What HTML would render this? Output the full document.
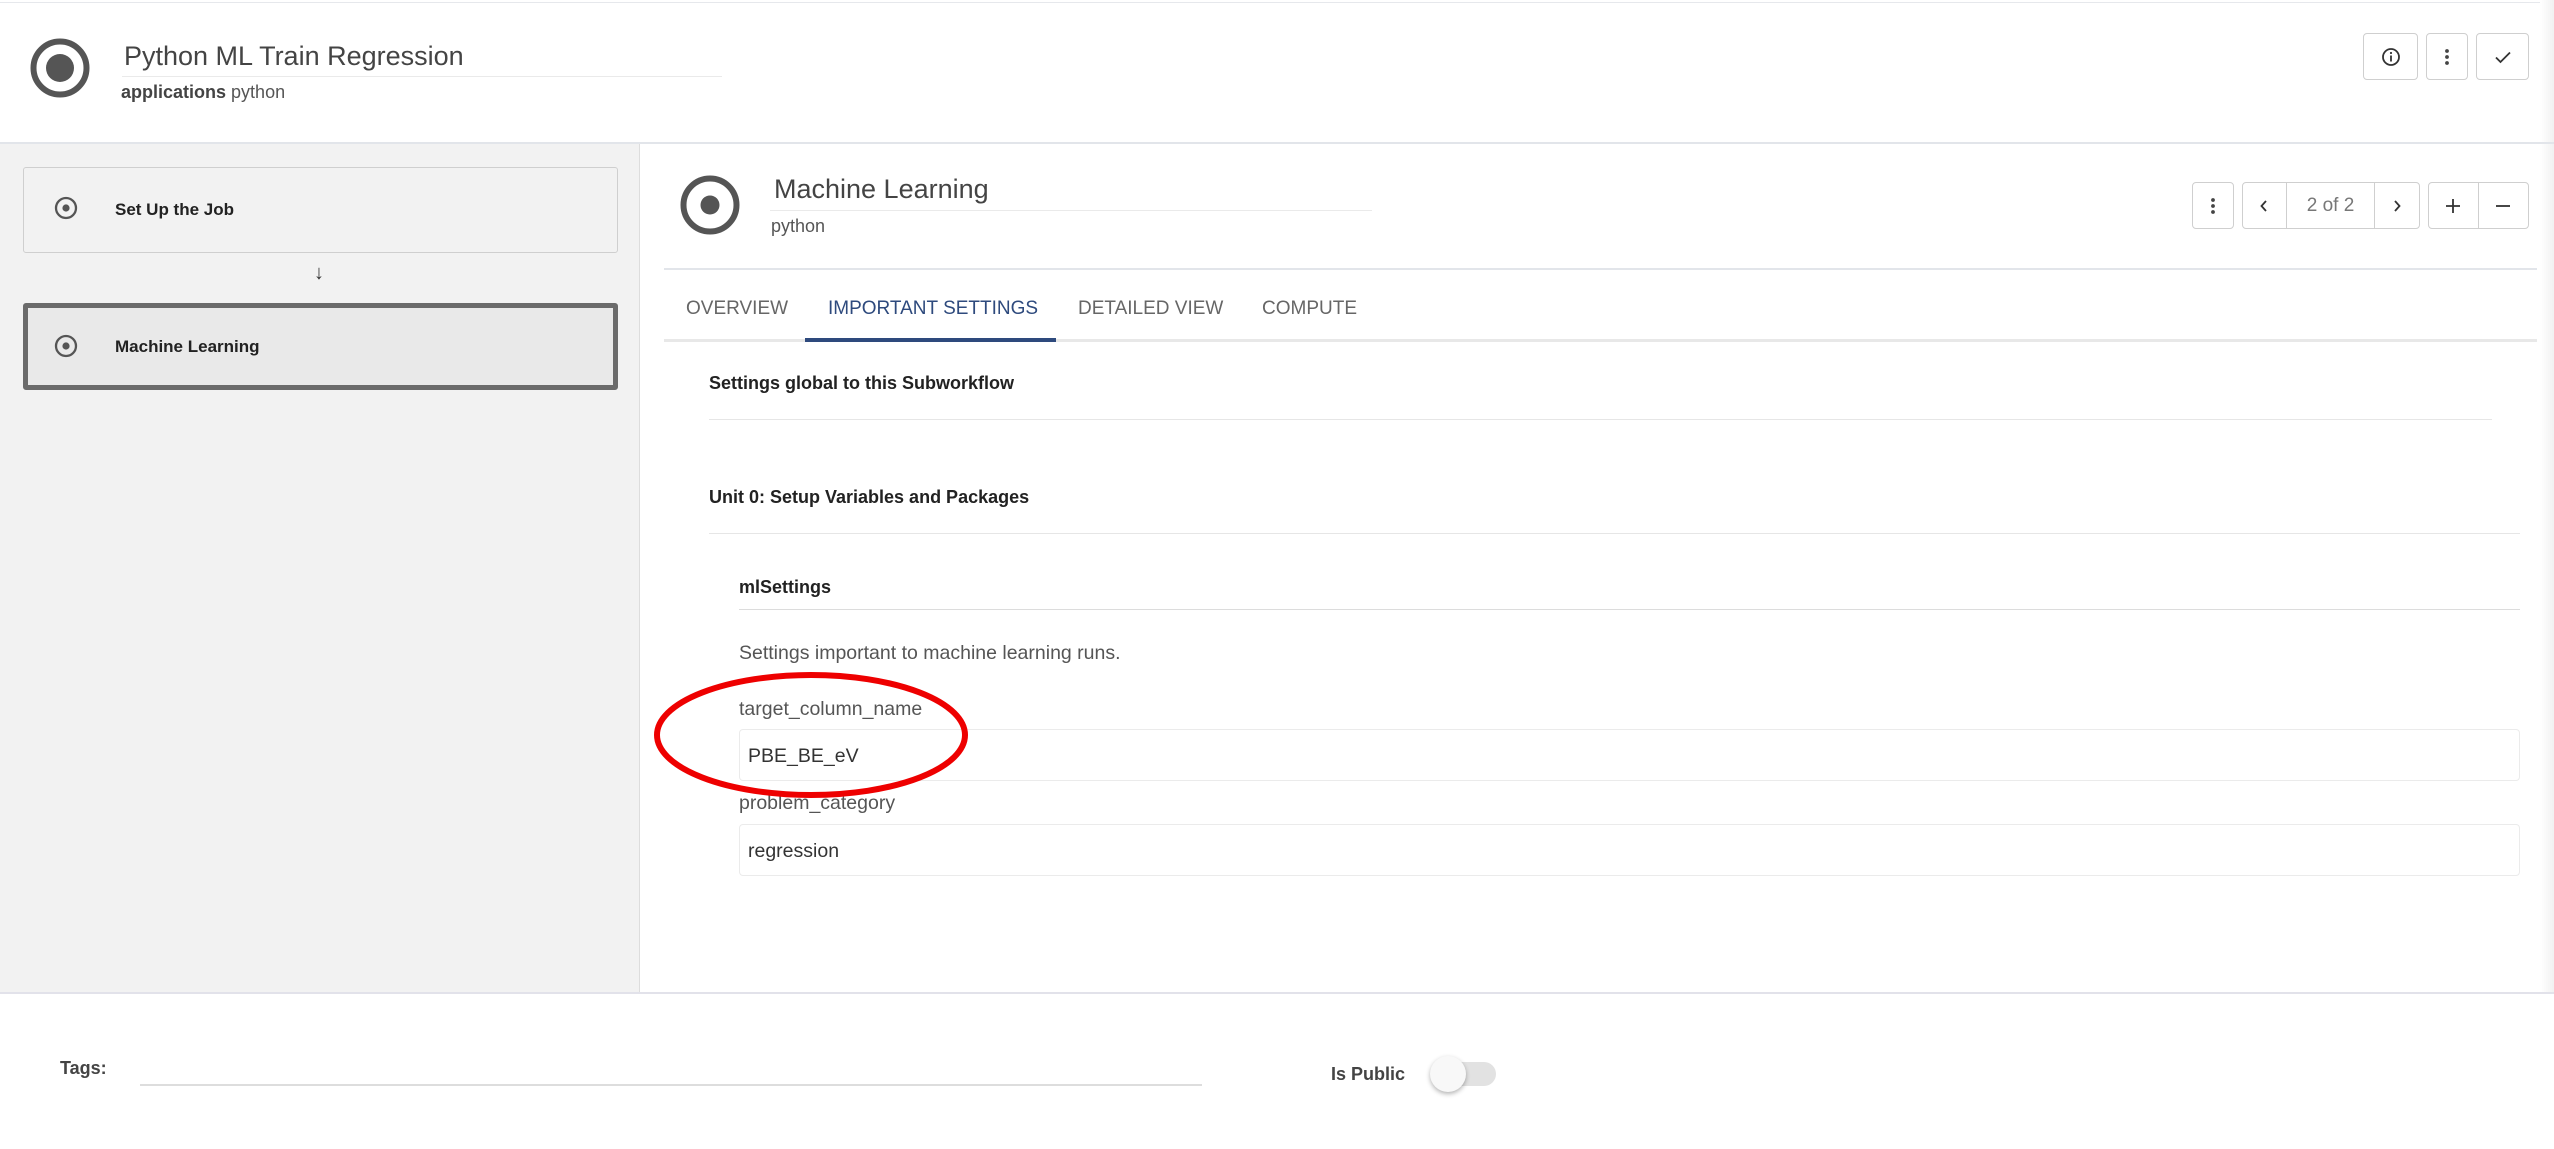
<!DOCTYPE html>
<html><head><meta charset="utf-8"><style>
*{margin:0;padding:0;box-sizing:border-box}
body{width:2554px;height:1149px;position:relative;background:#fff;font-family:"Liberation Sans",Arial,sans-serif;overflow:hidden;color:#333}
.a{position:absolute;white-space:nowrap}
.btn{position:absolute;border:1px solid #cfcfcf;border-radius:4px;background:#fff;display:flex;align-items:center;justify-content:center;color:#444}
.line{position:absolute;height:1px;background:#e3e3e3}
</style></head><body>
<div class="line" style="left:0;top:2px;width:2554px;background:#e6e8ec"></div>
<!-- header -->
<svg class="a" style="left:28px;top:36px" width="64" height="64"><circle cx="32" cy="32" r="26.5" fill="none" stroke="#555" stroke-width="6"/><circle cx="32" cy="32" r="14" fill="#555"/></svg>
<div class="a" style="left:124px;top:41px;font-size:27px;color:#444">Python ML Train Regression</div>
<div class="line" style="left:122px;top:76px;width:600px;background:#eaeaea"></div>
<div class="a" style="left:121px;top:82px;font-size:18px;color:#444"><b>applications</b> <span style="color:#555">python</span></div>
<div class="btn" style="left:2363px;top:33px;width:55px;height:47px"><svg width="20" height="20"><circle cx="10" cy="10" r="8" fill="none" stroke="#333" stroke-width="1.8"/><rect x="9.1" y="8.5" width="1.8" height="6" fill="#333"/><circle cx="10" cy="6" r="1.1" fill="#333"/></svg></div>
<div class="btn" style="left:2426px;top:33px;width:42px;height:47px"><svg width="6" height="18"><circle cx="3" cy="3" r="1.9" fill="#444"/><circle cx="3" cy="9" r="1.9" fill="#444"/><circle cx="3" cy="15" r="1.9" fill="#444"/></svg></div>
<div class="btn" style="left:2476px;top:33px;width:53px;height:47px"><svg width="18" height="14"><path d="M2 7.5 L6.5 12 L16 2.5" fill="none" stroke="#333" stroke-width="1.8"/></svg></div>
<div class="a" style="left:2540px;top:0;width:14px;height:992px;background:linear-gradient(90deg,#fff,#f1f1f1)"></div>
<div class="line" style="left:0;top:142px;width:2554px;height:2px;background:#e2e5ea"></div>
<!-- left panel -->
<div class="a" style="left:0;top:144px;width:640px;height:848px;background:#f2f2f2;border-right:1px solid #ddd"></div>
<div class="a" style="left:23px;top:167px;width:595px;height:86px;border:1px solid #cfcfcf;border-radius:3px;background:#f2f2f2"></div>
<svg class="a" style="left:54px;top:196px" width="24" height="24"><circle cx="12" cy="12" r="10" fill="none" stroke="#555" stroke-width="2.3"/><circle cx="12" cy="12" r="3.6" fill="#555"/></svg>
<div class="a" style="left:115px;top:200px;font-size:17px;font-weight:bold;color:#222">Set Up the Job</div>
<div class="a" style="left:314px;top:262px;font-size:20px;color:#333">↓</div>
<div class="a" style="left:23px;top:303px;width:595px;height:87px;border:5px solid #6b6b6b;border-radius:3px;background:#e9e9e9"></div>
<svg class="a" style="left:54px;top:334px" width="24" height="24"><circle cx="12" cy="12" r="10" fill="none" stroke="#555" stroke-width="2.3"/><circle cx="12" cy="12" r="3.6" fill="#555"/></svg>
<div class="a" style="left:115px;top:337px;font-size:17px;font-weight:bold;color:#222">Machine Learning</div>
<!-- right header -->
<svg class="a" style="left:678px;top:173px" width="64" height="64"><circle cx="32" cy="32" r="26.5" fill="none" stroke="#555" stroke-width="6"/><circle cx="32" cy="32" r="9.5" fill="#555"/></svg>
<div class="a" style="left:774px;top:174px;font-size:27px;color:#444">Machine Learning</div>
<div class="line" style="left:770px;top:210px;width:602px;background:#eaeaea"></div>
<div class="a" style="left:771px;top:216px;font-size:18px;color:#555">python</div>
<div class="btn" style="left:2192px;top:182px;width:42px;height:47px"><svg width="6" height="18"><circle cx="3" cy="3" r="1.9" fill="#444"/><circle cx="3" cy="9" r="1.9" fill="#444"/><circle cx="3" cy="15" r="1.9" fill="#444"/></svg></div>
<div class="btn" style="left:2242px;top:182px;width:178px;height:47px;justify-content:flex-start">
<div style="width:44px;height:100%;border-right:1px solid #cfcfcf;display:flex;align-items:center;justify-content:center"><svg width="10" height="14"><path d="M7 2 L2.5 7 L7 12" fill="none" stroke="#333" stroke-width="1.8"/></svg></div>
<div style="width:89px;height:100%;border-right:1px solid #cfcfcf;display:flex;align-items:center;justify-content:center;font-size:19px;color:#777">2 of 2</div>
<div style="width:44px;display:flex;align-items:center;justify-content:center"><svg width="10" height="14"><path d="M3 2 L7.5 7 L3 12" fill="none" stroke="#333" stroke-width="1.8"/></svg></div></div>
<div class="btn" style="left:2428px;top:182px;width:101px;height:47px;justify-content:flex-start">
<div style="width:50px;height:100%;border-right:1px solid #cfcfcf;display:flex;align-items:center;justify-content:center"><svg width="16" height="16"><path d="M8 1v14M1 8h14" stroke="#333" stroke-width="1.8"/></svg></div>
<div style="width:50px;display:flex;align-items:center;justify-content:center"><svg width="16" height="16"><path d="M1 8h14" stroke="#333" stroke-width="1.8"/></svg></div></div>
<div class="line" style="left:664px;top:268px;width:1873px;height:2px;background:#e2e5ea"></div>
<!-- tabs -->
<div class="a" style="left:686px;top:298px;font-size:19px;color:#666">OVERVIEW</div>
<div class="a" style="left:828px;top:298px;font-size:19px;color:#2e4a7d">IMPORTANT SETTINGS</div>
<div class="a" style="left:1078px;top:298px;font-size:19px;color:#666">DETAILED VIEW</div>
<div class="a" style="left:1262px;top:298px;font-size:19px;color:#666">COMPUTE</div>
<div class="line" style="left:664px;top:339px;width:1873px;height:3px;background:#e8e8e8"></div>
<div class="a" style="left:805px;top:338px;width:251px;height:4px;background:#2e4a7d"></div>
<!-- content -->
<div class="a" style="left:709px;top:373px;font-size:18px;font-weight:bold;color:#222">Settings global to this Subworkflow</div>
<div class="line" style="left:709px;top:419px;width:1783px;background:#e6e6e6"></div>
<div class="a" style="left:709px;top:487px;font-size:18px;font-weight:bold;color:#222">Unit 0: Setup Variables and Packages</div>
<div class="line" style="left:709px;top:533px;width:1811px;background:#e6e6e6"></div>
<div class="a" style="left:739px;top:577px;font-size:18px;font-weight:bold;color:#222">mlSettings</div>
<div class="line" style="left:739px;top:609px;width:1781px;background:#dcdcdc"></div>
<div class="a" style="left:739px;top:642px;font-size:19.5px;color:#555">Settings important to machine learning runs.</div>
<div class="a" style="left:739px;top:698px;font-size:19.5px;color:#555">target_column_name</div>
<div class="a" style="left:739px;top:729px;width:1781px;height:52px;border:1px solid #ebebeb;border-radius:4px"></div>
<div class="a" style="left:748px;top:745px;font-size:19.5px;color:#333">PBE_BE_eV</div>
<div class="a" style="left:739px;top:792px;font-size:19.5px;color:#555">problem_category</div>
<div class="a" style="left:739px;top:824px;width:1781px;height:52px;border:1px solid #ebebeb;border-radius:4px"></div>
<div class="a" style="left:748px;top:840px;font-size:19.5px;color:#333">regression</div>
<svg class="a" style="left:650px;top:668px" width="330" height="135"><ellipse cx="161" cy="67" rx="154" ry="60" fill="none" stroke="#ee0000" stroke-width="6"/></svg>
<!-- footer -->
<div class="line" style="left:0;top:992px;width:2554px;height:2px;background:#e2e2ea"></div>
<div class="a" style="left:60px;top:1058px;font-size:18px;font-weight:bold;color:#444">Tags:</div>
<div class="line" style="left:140px;top:1084px;width:1062px;height:2px;background:#ddd"></div>
<div class="a" style="left:1331px;top:1064px;font-size:18px;font-weight:bold;color:#444">Is Public</div>
<div class="a" style="left:1433px;top:1062px;width:63px;height:24px;border-radius:12px;background:#e2e2e2"></div>
<div class="a" style="left:1430px;top:1056px;width:36px;height:36px;border-radius:50%;background:#f8f8f8;box-shadow:0 2px 5px rgba(0,0,0,.3)"></div>
</body></html>
